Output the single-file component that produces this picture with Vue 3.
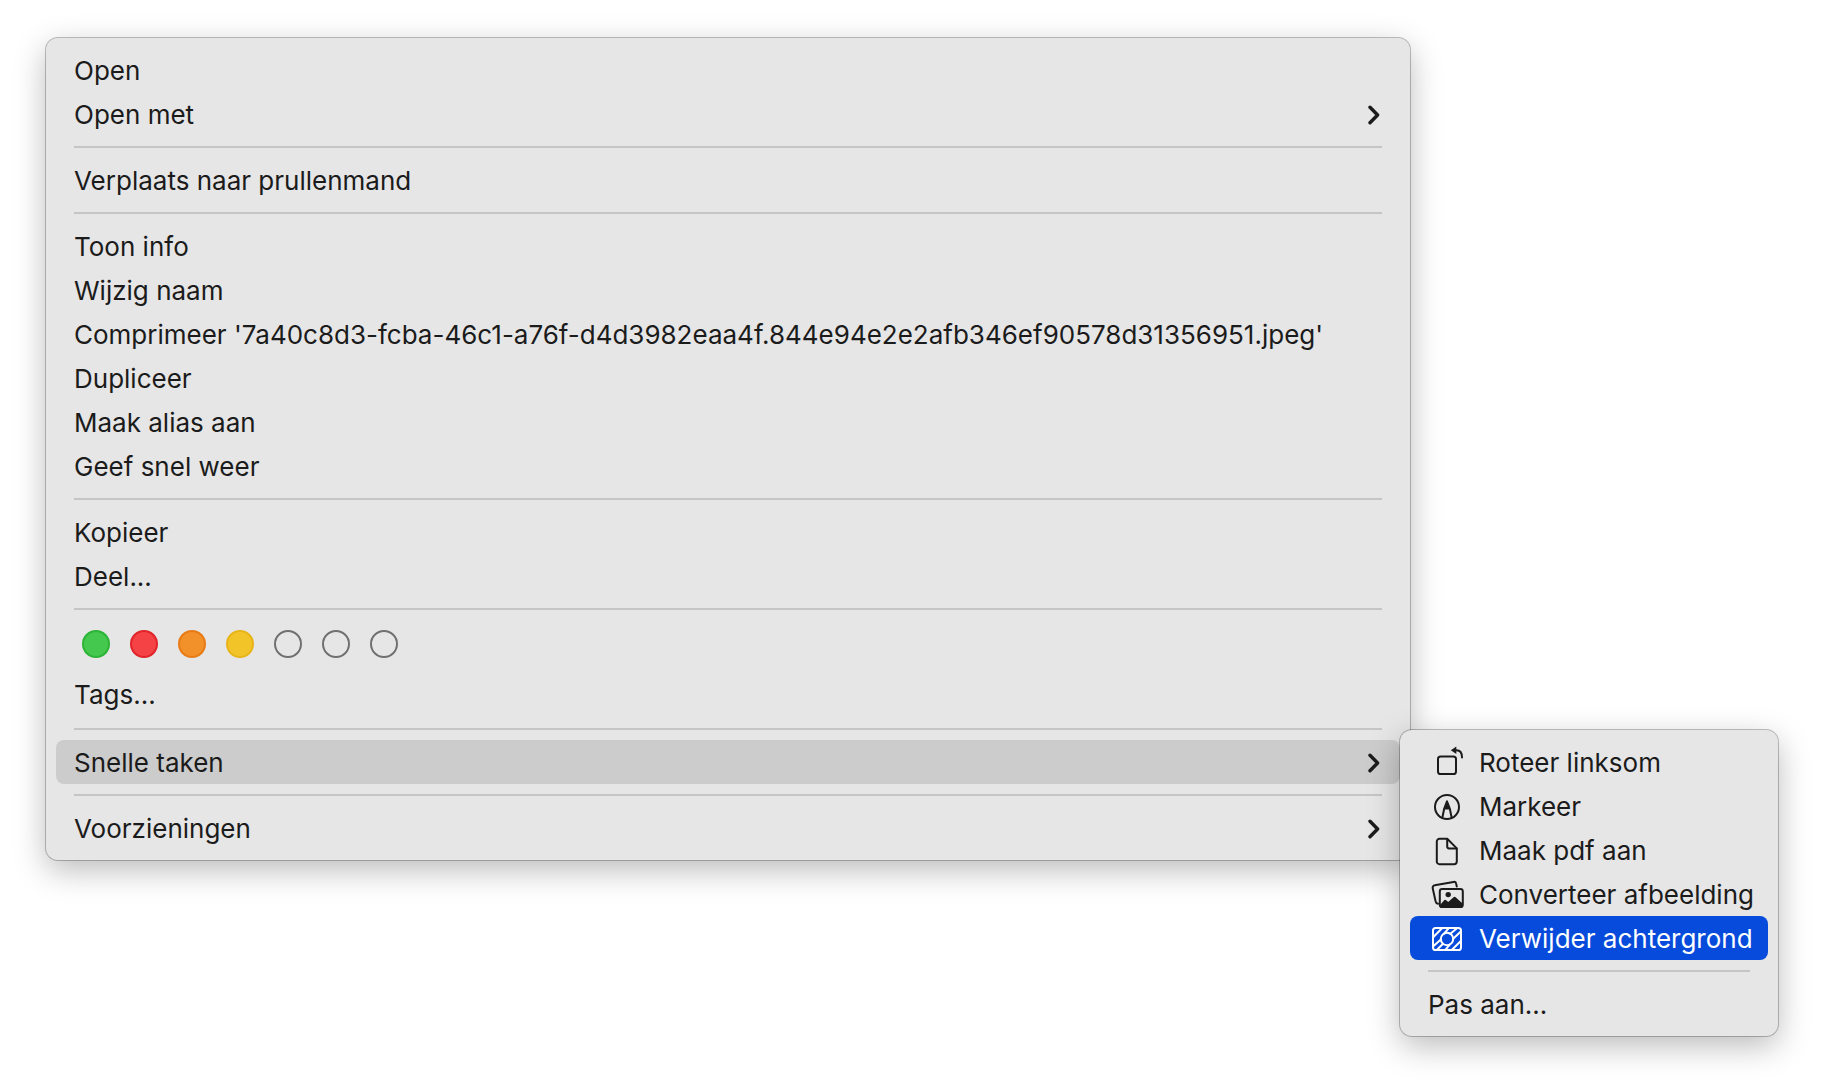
<script setup>
const groups = [
  [{ label: 'Open' }, { label: 'Open met', more: true }],
  [{ label: 'Verplaats naar prullenmand' }],
  [
    { label: 'Toon info' },
    { label: 'Wijzig naam' },
    { label: "Comprimeer '7a40c8d3-fcba-46c1-a76f-d4d3982eaa4f.844e94e2e2afb346ef90578d31356951.jpeg'" },
    { label: 'Dupliceer' },
    { label: 'Maak alias aan' },
    { label: 'Geef snel weer' },
  ],
  [{ label: 'Kopieer' }, { label: 'Deel...' }],
  [{ swatches: true }, { label: 'Tags...' }],
  [{ label: 'Snelle taken', more: true, open: true }],
  [{ label: 'Voorzieningen', more: true }],
]

const tags = ['green', 'red', 'orange', 'yellow', 'empty', 'empty', 'empty']

const actions = [
  { label: 'Roteer linksom', icon: 'rotate' },
  { label: 'Markeer', icon: 'markup' },
  { label: 'Maak pdf aan', icon: 'doc' },
  { label: 'Converteer afbeelding', icon: 'photos' },
  { label: 'Verwijder achtergrond', icon: 'backdrop', active: true },
]
</script>

<template>
  <main class="page">
    <ul class="menu">
      <template v-for="(group, g) in groups" :key="g">
        <li v-if="g > 0" class="separator" role="separator"></li>
        <li v-for="(item, i) in group" :key="i" class="entry">
          <div v-if="item.swatches" class="swatches">
            <button v-for="(tag, t) in tags" :key="t" type="button" class="swatch" :class="tag" :aria-label="tag"></button>
          </div>
          <button v-else type="button" class="item" :class="{ open: item.open }">
            <span class="label">{{ item.label }}</span>
            <svg v-if="item.more" class="chevron" viewBox="0 0 12 20" aria-hidden="true">
              <path d="M2 2.2 9.6 10 2 17.8" />
            </svg>
          </button>

          <ul v-if="item.open" class="menu submenu">
            <li v-for="action in actions" :key="action.icon" class="entry">
              <button type="button" class="item action" :class="{ active: action.active }">
                <svg class="icon" viewBox="0 0 36 36" aria-hidden="true">
                  <g v-if="action.icon === 'rotate'">
                    <rect x="8" y="11.500" width="18" height="17.5" rx="2.6" />
                    <path d="M25 5.200h1.500c3.800 0 5.500 2.500 5.500 7.200" />
                    <path class="solid" d="M20.800 5.200 26.300 1.400v7.600Z" />
                  </g>
                  <g v-else-if="action.icon === 'markup'">
                    <circle cx="17" cy="18" r="12" />
                    <path d="M12.400 28.500 14.200 19.500 17 12.400l2.800 7.100 1.800 9M14.200 19.500h5.600" />
                    <path class="solid" d="M17 11.200 13.900 20h6.200Z" />
                  </g>
                  <g v-else-if="action.icon === 'doc'">
                    <path d="M9.500 5.800h7.700l9.600 9.600v13.100a2.700 2.700 0 0 1-2.700 2.700H9.500a2.700 2.700 0 0 1-2.700-2.700v-20a2.700 2.700 0 0 1 2.700-2.700Z" />
                    <path d="M17.200 6v7.600a1.800 1.800 0 0 0 1.800 1.800h7.600" />
                  </g>
                  <g v-else-if="action.icon === 'photos'">
                    <path d="M8 26.700a2.800 2.800 0 0 1-2.400-2.300L2.700 11.200a2.400 2.400 0 0 1 2-2.900l18.800-3.400a2.400 2.400 0 0 1 2.700 2l.6 2.600" />
                    <rect x="9.800" y="11.900" width="23" height="18.200" rx="2.400" />
                    <circle class="solid" cx="18.200" cy="17.600" r="2.700" />
                    <path class="solid" d="M9.800 28.300 14.200 23.200q1-.9 2 0l2 1.800 5.300-4.800q1.100-1 2.200 0l7.100 6.500v2.200a1.700 1.700 0 0 1-1.700 1.700H11.500a1.700 1.700 0 0 1-1.700-1.900Z" />
                  </g>
                  <g v-else>
                    <rect x="3" y="7" width="28" height="22" rx="2.600" />
                    <circle cx="17" cy="18" r="6.200" />
                    <path d="M3.200 16.200 12 7.200M14 12.600 18.800 7.200M3.300 25.300 10.800 18.500M7 28.700 13 22.800M20.400 12.800 27 7.300M23.200 17.800 30.800 10.600M20 23.400 15.300 28.800M22 28.800 30.800 20" />
                  </g>
                </svg>
                <span class="label">{{ action.label }}</span>
              </button>
            </li>
            <li class="separator" role="separator"></li>
            <li class="entry">
              <button type="button" class="item"><span class="label">Pas aan...</span></button>
            </li>
          </ul>
        </li>
      </template>
    </ul>
  </main>
</template>

<style>
body {
  margin: 0;
  background: #fff;
}
</style>

<style scoped>
.page {
  box-sizing: border-box;
  min-height: 100vh;
  padding: 38px 414px 230px 46px;
  font-family: Inter, "Liberation Sans", sans-serif;
  font-size: 26px;
  color: #1b1b1b;
}

.menu {
  margin: 0;
  padding: 10px;
  list-style: none;
  background: #e6e6e6;
  border-radius: 12px;
  box-shadow: 0 0 0 1px rgba(0, 0, 0, 0.24), 0 10px 32px rgba(0, 0, 0, 0.27);
}

.entry {
  position: relative;
}

.item {
  display: flex;
  align-items: center;
  justify-content: space-between;
  box-sizing: border-box;
  width: 100%;
  height: 44px;
  padding: 2px 18px 0;
  border: 0;
  border-radius: 8px;
  background: transparent;
  color: inherit;
  font: inherit;
  line-height: 42px;
  text-align: left;
  white-space: nowrap;
}

.item.open {
  background: #cccccc;
}

.item.active {
  background: #064bdb;
  color: #fff;
}

.item.action {
  justify-content: flex-start;
  gap: 13px;
  padding-left: 20px;
}

.chevron {
  width: 12px;
  height: 20px;
  margin-right: 2px;
  fill: none;
  stroke: currentColor;
  stroke-width: 3.4;
  stroke-linecap: round;
  stroke-linejoin: round;
}

.icon {
  flex: none;
  width: 36px;
  height: 36px;
  fill: none;
  stroke: currentColor;
  stroke-width: 2;
  stroke-linecap: round;
  stroke-linejoin: round;
}

.icon .solid {
  fill: currentColor;
  stroke-width: 0;
}

.separator {
  height: 2px;
  margin: 10px 18px;
  background: #c5c5c5;
}

.swatches {
  display: flex;
  gap: 20px;
  padding: 10px 26px 14px;
}

.entry:has(.swatches) + .entry {
  padding-bottom: 2px;
}

.swatch {
  box-sizing: border-box;
  width: 28px;
  height: 28px;
  padding: 0;
  border: 2px solid;
  border-radius: 50%;
}

.green {
  background: #44c84e;
  border-color: #2db436;
}

.red {
  background: #f54245;
  border-color: #e0242a;
}

.orange {
  background: #f29029;
  border-color: #e77c16;
}

.yellow {
  background: #f2c428;
  border-color: #e8b41a;
}

.empty {
  background: transparent;
  border-color: #707070;
}

.submenu {
  position: absolute;
  top: -10px;
  left: 100%;
  box-sizing: border-box;
  width: 378px;
}
</style>
